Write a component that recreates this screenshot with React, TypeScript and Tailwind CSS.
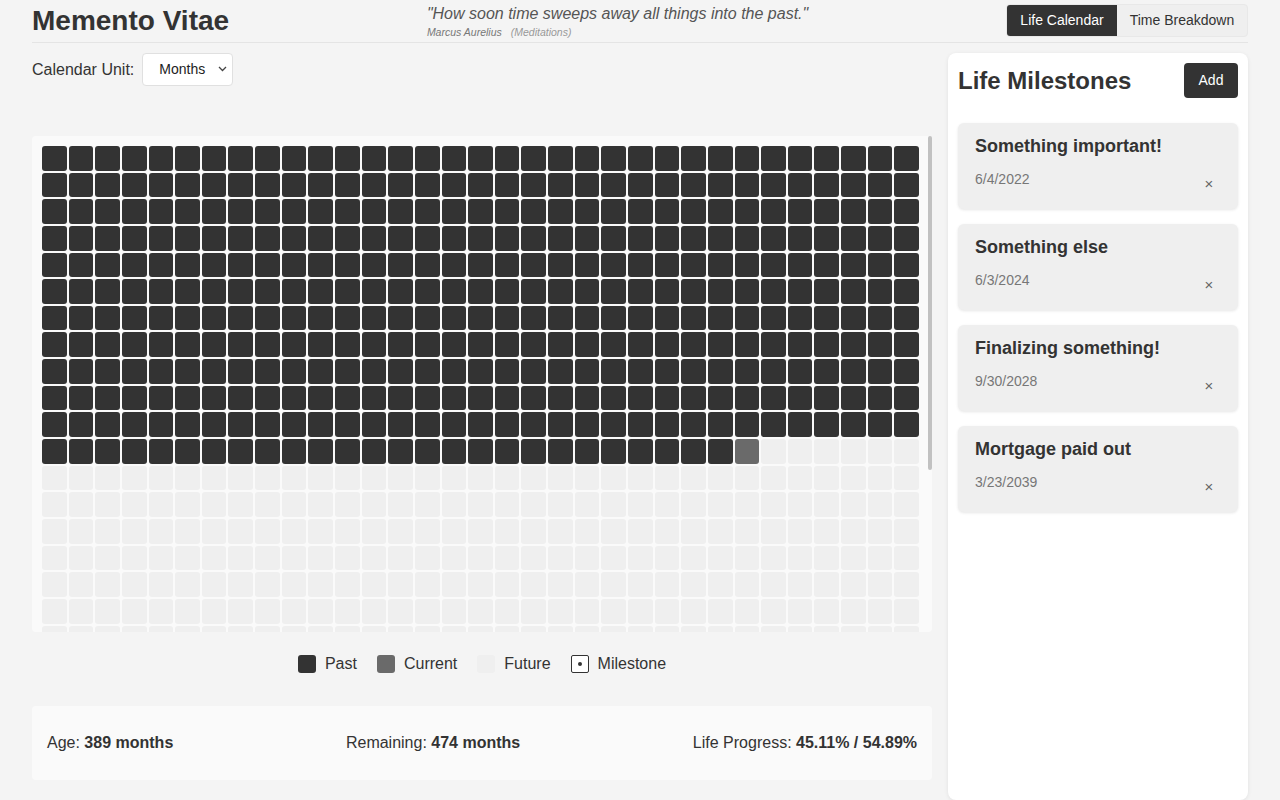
import React from "react";

const FONT = { fontFamily: '"Liberation Sans", Arial, Helvetica, sans-serif' };

const milestones = [
  { title: "Something important!", date: "6/4/2022" },
  { title: "Something else", date: "6/3/2024" },
  { title: "Finalizing something!", date: "9/30/2028" },
  { title: "Mortgage paid out", date: "3/23/2039" },
];

export default function App() {
  const past = 389;
  const total = 864;
  const cells = Array.from({ length: total }, (_, i) =>
    i < past ? "past" : i === past ? "current" : "future"
  );

  return (
    <div className="min-h-[800px] h-[800px] overflow-hidden bg-[#f4f4f4] px-8 text-[#333]" style={FONT}>
      <header className="flex h-[43px] items-center justify-between border-b border-[#e4e4e4] pb-[1px]">
        <h1 className="text-[28px] font-bold leading-[33px] text-[#333]">Memento Vitae</h1>
        <div className="flex flex-col">
          <div className="text-[16px] italic leading-[19px] text-[#555]">
            "How soon time sweeps away all things into the past."
          </div>
          <div className="mt-[3px] text-[10.5px] italic leading-[12px] text-[#777]">
            Marcus Aurelius
            <span className="ml-[9px] text-[#999]">(Meditations)</span>
          </div>
        </div>
        <div className="flex h-[33px] overflow-hidden rounded-[4px] border border-[#e8e8e8] bg-[#efefef] text-[14px]">
          <button className="flex w-[110px] items-center justify-center bg-[#333] text-white">Life Calendar</button>
          <button className="flex w-[130px] items-center justify-center text-[#333]">Time Breakdown</button>
        </div>
      </header>

      <main className="flex gap-4 pt-[10px]">
        <section className="w-[900px] shrink-0">
          <div className="flex h-[33px] items-center gap-2">
            <span className="text-[16px] text-[#333]">Calendar Unit:</span>
            <div className="relative">
              <select
                className="h-[33px] w-[91px] appearance-none rounded-[4px] border border-[#e0e0e0] bg-white pl-[16px] pr-[24px] text-[14px] text-[#222]"
                style={FONT}
                defaultValue="Months"
              >
                <option>Weeks</option>
                <option>Months</option>
                <option>Years</option>
              </select>
              <svg
                className="pointer-events-none absolute right-[6px] top-[13px]"
                width="9"
                height="6"
                viewBox="0 0 9 6"
                fill="none"
              >
                <path d="M1 1l3.5 3.5L8 1" stroke="#444" strokeWidth="1.3" />
              </svg>
            </div>
          </div>

          <div className="relative mt-[50px] h-[496px] rounded-[4px] bg-[#fafafa]">
            <div className="h-full overflow-hidden pl-[10px] pr-[13px] pt-[10px]">
              <div className="grid grid-cols-[repeat(33,minmax(0,1fr))] gap-[2px]">
                {cells.map((c, i) => (
                  <div
                    key={i}
                    className={
                      "aspect-square rounded-[3px] " +
                      (c === "past" ? "bg-[#333]" : c === "current" ? "bg-[#6a6a6a]" : "bg-[#efefef]")
                    }
                  />
                ))}
              </div>
            </div>
            <div className="absolute right-0 top-0 h-[334px] w-[4px] rounded-[2px] bg-[#c1c1c1]" />
          </div>

          <div className="mt-[22px] flex h-[20px] items-center justify-center gap-5 text-[16px] text-[#333]">
            <div className="flex items-center gap-[9px]">
              <span className="h-[18px] w-[18px] rounded-[3px] bg-[#333]" />
              <span>Past</span>
            </div>
            <div className="flex items-center gap-[9px]">
              <span className="h-[18px] w-[18px] rounded-[3px] bg-[#6a6a6a]" />
              <span>Current</span>
            </div>
            <div className="flex items-center gap-[9px]">
              <span className="h-[18px] w-[18px] rounded-[3px] bg-[#efefef]" />
              <span>Future</span>
            </div>
            <div className="flex items-center gap-[9px]">
              <span className="flex h-[18px] w-[18px] items-center justify-center rounded-[2px] border-[1.5px] border-[#333] bg-white">
                <span className="h-[4px] w-[4px] rounded-full bg-[#333]" />
              </span>
              <span>Milestone</span>
            </div>
          </div>

          <div className="mt-[32px] flex h-[74px] items-center justify-between rounded-[4px] bg-[#fafafa] px-[15px] text-[16px] text-[#333]">
            <div>
              Age: <span className="font-bold">389 months</span>
            </div>
            <div>
              Remaining: <span className="font-bold">474 months</span>
            </div>
            <div>
              Life Progress: <span className="font-bold">45.11% / 54.89%</span>
            </div>
          </div>
        </section>

        <aside className="h-[747px] w-[300px] shrink-0 rounded-[8px] bg-white p-[10px] shadow-[0_1px_4px_rgba(0,0,0,0.08)]">
          <div className="flex h-[35px] items-center justify-between">
            <h2 className="text-[24px] font-bold text-[#333]">Life Milestones</h2>
            <button className="h-[35px] w-[54px] rounded-[4px] bg-[#333] text-[14px] text-white">Add</button>
          </div>
          <div className="mt-[25px] flex flex-col gap-[15px]">
            {milestones.map((m) => (
              <div
                key={m.title}
                className="rounded-[6px] bg-[#efefef] px-[17px] pt-[12px] pb-[12px] shadow-[0_1px_3px_rgba(0,0,0,0.1)]"
              >
                <h3 className="text-[18px] font-bold leading-[22px] text-[#333]">{m.title}</h3>
                <div className="mt-[12px] flex h-[28px] items-start justify-between">
                  <span className="text-[14px] leading-[20px] text-[#777]">{m.date}</span>
                  <button className="flex h-[30px] w-[24px] items-center justify-center text-[15px] text-[#666]">
                    ×
                  </button>
                </div>
              </div>
            ))}
          </div>
        </aside>
      </main>
    </div>
  );
}
